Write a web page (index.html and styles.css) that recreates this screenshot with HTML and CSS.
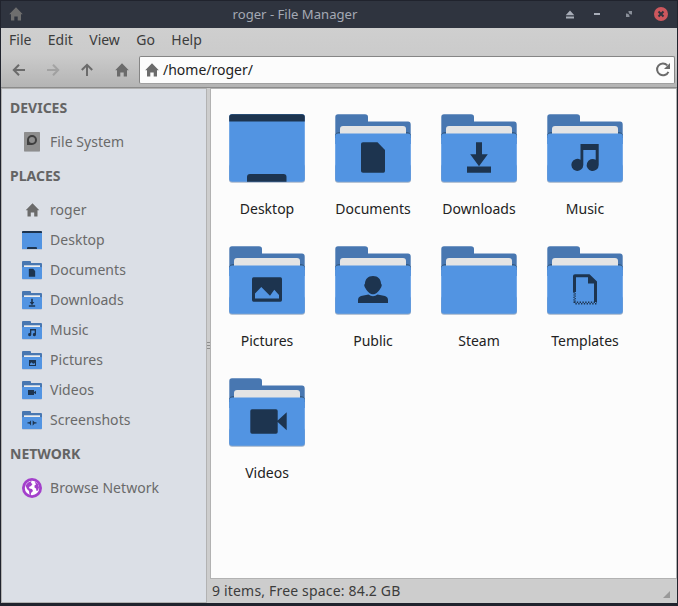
FILE: index.html
```html
<!DOCTYPE html>
<html lang="en">
<head>
<meta charset="utf-8">
<title>roger - File Manager</title>
<link rel="stylesheet" href="styles.css">
</head>
<body>
<svg class="defs" aria-hidden="true">
  <symbol id="home" viewBox="0 0 14 14"><path d="M7 .3 13.8 7.3H12V13.4H8.7V9.4H5.3V13.4H2V7.3H.2Z"/></symbol>
  <symbol id="folder" viewBox="0 0 76 69">
    <rect y="50" width="76" height="18.800" rx="3" fill="#9fb0c6"/>
    <path d="M.3 30V3Q.3 .3 3 .3H30Q33 .3 33 3V7.400H73Q75.700 7.400 75.700 10.400V30Z" fill="#4877b1"/>
    <path d="M.3 24V20.500Q1 18 4 18H72Q75 18 75.700 20.500V24Z" fill="#34587f"/>
    <path d="M5 20V15Q5 12 8 12H68Q71 12 71 15V20Z" fill="#e4e4e4"/>
    <rect x=".2" y="19.400" width="75.600" height="48.300" rx="3" fill="#5294e2"/>
  </symbol>
  <symbol id="folder-small" viewBox="0 0 20 19">
    <rect y="8" width="20" height="10.600" rx="1" fill="#a5b4c8"/>
    <path d="M0 8V1Q0 0 1 0H8Q9 0 9 1V2H19Q20 2 20 3V8Z" fill="#4877b1"/>
    <path d="M2 4.300H18V7H2Z" fill="#eeeeee"/>
    <rect y="6" width="20" height="12" rx=".7" fill="#5294e2"/>
  </symbol>
  <symbol id="desktop" viewBox="0 0 76 69">
    <rect y="50" width="76" height="18.800" rx="3" fill="#a9b7ca"/>
    <rect x=".2" width="75.600" height="67.700" rx="3" fill="#5294e2"/>
    <path d="M.2 7.600V3Q.2 .2 3 .2H73Q75.800 .2 75.800 3V7.600Z" fill="#1d344f"/>
    <path d="M18 67.700V63Q18 60 21 60H54.500Q57.500 60 57.500 63V67.700Z" fill="#1d344f"/>
  </symbol>
  <symbol id="document" viewBox="0 0 76 69"><path d="M28 28.300H42.500L50 36V57Q50 58.700 48.500 58.700H28Q26 58.700 26 57V30Q26 28.300 28 28.300Z"/></symbol>
  <symbol id="download" viewBox="0 0 76 69"><path d="M35 28.300H41V40.300H46.800L38 52.300 29.200 40.300H35ZM26 52.500H50V58.700H26Z"/></symbol>
  <symbol id="music" viewBox="0 0 76 69"><path d="M33.500 30H51.700V51A6 6 0 1 1 48.700 45.800V36H36.300V51A6 6 0 1 1 33.500 45.800Z"/></symbol>
  <symbol id="picture" viewBox="0 0 76 69"><path fill-rule="evenodd" d="M24.500 31.300H51.500Q53 31.300 53 33V54Q53 55.700 51.500 55.700H24.500Q23 55.700 23 54V33Q23 31.300 24.500 31.300ZM26 52.500H50V49L45.300 43.800 41 49.700 32.300 41 26 47.500Z"/></symbol>
  <symbol id="person" viewBox="0 0 76 69"><path d="M38 30C43 30 46 33.500 46 37.500Q47.500 38.500 46.300 41C44 45.500 41 48.300 38 48.300S32 45.500 29.700 41Q28.500 38.500 30 37.500C30 33.500 33 30 38 30ZM33.500 48.500Q38 52 42.500 48.500L50 50Q53 51 53 54V57H23V54Q23 51 26 50Z"/></symbol>
  <symbol id="template" viewBox="0 0 76 69">
    <path d="M26 46V30Q26 28.300 28 28.300H42.500L50 35.500V56H47V37.500H41V31.300H29V46Z"/>
    <path d="M27 46V57M28.200 47.200V57" fill="none" stroke="#1d344f" stroke-width="1.300" stroke-dasharray="1.200 1.200"/>
    <path d="M27 56.300H50M28.400 57.700H50" fill="none" stroke="#1d344f" stroke-width="1.400" stroke-dasharray="1.400 1.400"/>
  </symbol>
  <symbol id="video" viewBox="0 0 76 69"><path d="M23 31.300H47Q48.700 31.300 48.700 33V42.500L57.700 34.300V52.300L48.700 44V54Q48.700 55.700 47 55.700H23Q21.300 55.700 21.300 54V33Q21.300 31.300 23 31.300Z"/></symbol>
  <symbol id="shots" viewBox="0 0 76 69"><path d="M21 41.500H28L34.500 34V54L28 46H21ZM55 41.500H48L40.500 34V54L48 46H55Z"/></symbol>
</svg>

<div class="window">
  <header class="titlebar">
    <svg class="app-icon"><use href="#home"/></svg>
    <h1 class="title">roger - File Manager</h1>
    <div class="controls">
      <svg class="control" viewBox="0 0 22 22"><path d="M11 7.500 15.300 12.300H6.700ZM7 13.500H15V15.500H7Z"/></svg>
      <svg class="control" viewBox="0 0 22 22"><path d="M8 10H14V12H8Z"/></svg>
      <svg class="control" viewBox="0 0 22 22"><path d="M10 8H14V12L13 11 12.300 11.600 10.500 9.800 11 9ZM8 10 9 11 9.700 10.400 11.600 12.300 11 13 12 14H8Z" opacity=".75"/></svg>
      <svg class="close" viewBox="0 0 14 14"><circle cx="7" cy="7" r="7"/><path d="m4.500 4.500 5 5m0-5-5 5"/></svg>
    </div>
  </header>
  <div class="chrome">
    <nav class="menubar"><span>File</span><span>Edit</span><span>View</span><span>Go</span><span>Help</span></nav>
    <div class="toolbar">
      <svg class="tool" viewBox="0 0 14 14"><path class="line" d="M13 7H2M7 1.800 1.800 7 7 12.200"/></svg>
      <svg class="tool disabled" viewBox="0 0 14 14"><path class="line" d="M1 7H12M7 1.800 12.200 7 7 12.200"/></svg>
      <svg class="tool" viewBox="0 0 14 14"><path class="line" d="M7 13V2M1.800 7 7 1.800 12.200 7"/></svg>
      <svg class="tool go-home"><use href="#home"/></svg>
      <div class="location">
        <svg class="tool"><use href="#home"/></svg>
        <span class="path">/home/roger/</span>
        <svg class="reload" viewBox="0 0 16 16"><path class="arc" d="M12.300 3.400A5.900 5.900 0 1 0 13.400 9.800"/><path d="M15 1V7H9Z"/></svg>
      </div>
    </div>
  </div>
  <div class="body">
    <aside class="sidebar">
      <h2>DEVICES</h2>
      <div class="place"><svg viewBox="0 0 20 20"><rect x="2" y=".5" width="16" height="19.500" rx=".7" fill="#b7bbc1"/><rect x="2" width="16" height="19.300" rx=".7" fill="#8e8e8e"/><path d="M5 8H8V11H10V13H5Z" fill="#3f3f3f"/><circle cx="10" cy="8" r="4" fill="#8e8e8e" stroke="#3f3f3f" stroke-width="2"/></svg>File System</div>
      <h2>PLACES</h2>
      <div class="place"><svg class="home" viewBox="0 0 20 20"><use href="#home" x="3.500" y="3" width="14" height="14"/></svg>roger</div>
      <div class="place"><svg viewBox="0 0 20 20"><path d="M0 2H20V19.500H0Z" fill="#a9b7ca"/><path d="M0 1.500H20V19H0Z" fill="#5294e2"/><path d="M0 3V2Q0 1 1 1H19Q20 1 20 2V3ZM5 19V18Q5 17 6 17H14Q15 17 15 18V19Z"/></svg>Desktop</div>
      <div class="place"><svg viewBox="0 0 20 20"><use href="#folder-small" y="1" width="20" height="19"/><use href="#document" y="1" width="20" height="19"/></svg>Documents</div>
      <div class="place"><svg viewBox="0 0 20 20"><use href="#folder-small" y="1" width="20" height="19"/><use href="#download" y="1" width="20" height="19"/></svg>Downloads</div>
      <div class="place"><svg viewBox="0 0 20 20"><use href="#folder-small" y="1" width="20" height="19"/><path d="M8 9H14V14.500A1.600 1.600 0 1 1 12.700 13V10.600H9.300V14.500A1.600 1.600 0 1 1 8 13Z"/></svg>Music</div>
      <div class="place"><svg viewBox="0 0 20 20"><use href="#folder-small" y="1" width="20" height="19"/><path fill-rule="evenodd" d="M7 10H14V16H7ZM8 15H13V13.700L12.200 12.700 11.300 14 9.500 12.200 8 13.700Z"/></svg>Pictures</div>
      <div class="place"><svg viewBox="0 0 20 20"><use href="#folder-small" y="1" width="20" height="19"/><path d="M6 10H12V12L14 10.700V14.300L12 13V15H6Z"/></svg>Videos</div>
      <div class="place"><svg viewBox="0 0 20 20"><use href="#folder-small" y="1" width="20" height="19"/><use href="#shots" y="1" width="20" height="19"/></svg>Screenshots</div>
      <h2>NETWORK</h2>
      <div class="place"><svg viewBox="0 0 20 20"><circle cx="10" cy="10" r="10" fill="#a340cb"/><circle cx="10" cy="10" r="7.200" fill="#fff"/><path d="M3.500 7.500 6 4.500 9.500 3 9 5 10.500 6 9 8 7 9 7.500 10.500 10 11 11 13 9 15 9 17 7.500 16.500 7 13 5 11ZM12.500 3.500 16 6 17 9.500 16 12.500 14.500 13 14 10.500 12.500 9.500 12.500 7.500 14 6.500Z" fill="#a340cb"/></svg>Browse Network</div>
    </aside>
    <div class="splitter"><i></i><i></i><i></i></div>
    <div class="main">
      <main class="files">
        <figure><svg><use href="#desktop"/></svg><figcaption>Desktop</figcaption></figure>
        <figure><svg><use href="#folder"/><use href="#document"/></svg><figcaption>Documents</figcaption></figure>
        <figure><svg><use href="#folder"/><use href="#download"/></svg><figcaption>Downloads</figcaption></figure>
        <figure><svg><use href="#folder"/><use href="#music"/></svg><figcaption>Music</figcaption></figure>
        <figure><svg><use href="#folder"/><use href="#picture"/></svg><figcaption>Pictures</figcaption></figure>
        <figure><svg><use href="#folder"/><use href="#person"/></svg><figcaption>Public</figcaption></figure>
        <figure><svg><use href="#folder"/></svg><figcaption>Steam</figcaption></figure>
        <figure><svg><use href="#folder"/><use href="#template"/></svg><figcaption>Templates</figcaption></figure>
        <figure><svg><use href="#folder"/><use href="#video"/></svg><figcaption>Videos</figcaption></figure>
      </main>
      <footer class="status">9 items, Free space: 84.2 GB<svg class="grip" viewBox="0 0 7 7"><path d="M7 0V7H0Z"/></svg></footer>
    </div>
  </div>
</div>
</body>
</html>
```
FILE: styles.css
```css
* { box-sizing: border-box; }
body {
  margin: 0;
  font: 14px/20px "Noto Sans", sans-serif;
  color: #3c3c3c;
}
h1, h2, figure { margin: 0; }
svg { display: block; flex: none; }
.defs { position: absolute; width: 0; height: 0; }

.window {
  display: flex;
  flex-direction: column;
  width: 678px;
  height: 606px;
  padding: 0 1px 3px;
  background: #20232d;
}
.titlebar {
  display: grid;
  grid-template-columns: 30px 1fr 118px;
  align-items: center;
  height: 28px;
  padding-bottom: 1px;
  border-top: 1px solid #20232d;
  background: #2f343f;
}
.app-icon { width: 14px; height: 14px; margin-left: 8px; fill: #6e6e6e; }
.title {
  text-align: center;
  font-size: 13.100px;
  font-weight: 400;
  color: #a4a9b4;
}
.controls { display: flex; align-items: center; }
.control { width: 22px; height: 22px; margin-right: 5px; fill: #a8adb8; }
.control:nth-child(2) { margin-right: 10px; }
.control:nth-child(3) { margin-right: 14px; }
.close { width: 14px; height: 14px; fill: #cc575d; }
.close path { stroke: #2f343f; stroke-width: 2; }

.chrome {
  height: 60px;
  border-bottom: 1px solid #8b8b8b;
  background: linear-gradient(#cfcfcf 0, #cbcbcb 45%, #b4b4b4 100%);
}
.menubar { display: flex; gap: 16.400px; height: 28px; padding: 2px 8px 0; }
.toolbar { display: flex; align-items: center; gap: 20px; height: 28px; padding-left: 11px; }
.tool { width: 14px; height: 14px; fill: #6b6b6b; }
.go-home { margin: 0 -1px 0 1px; }
.line { fill: none; stroke: #6b6b6b; stroke-width: 2; }
.disabled { opacity: .35; }
.location {
  display: flex;
  flex: 1;
  align-items: center;
  height: 28px;
  margin: 0 2px 0 -9px;
  padding: 0 3px 0 5px;
  border: 1px solid #858585;
  border-bottom-color: #a0a0a0;
  border-radius: 2px;
  background: #fcfcfc;
}
.path { flex: 1; margin-left: 4px; color: #222; }
.reload { width: 16px; height: 16px; fill: #6b6b6b; }
.arc { fill: none; stroke: #6b6b6b; stroke-width: 2; }

.body { display: flex; flex: 1; min-height: 0; background: #cdcdcd; }
.sidebar {
  width: 206px;
  border: 1px solid #b2b2b2;
  background: #dbdfe6;
  color: #6a6a6a;
}
.sidebar h2 { height: 38px; padding-left: 8px; font-size: 14px; line-height: 38px; font-weight: 700; color: #646464; }
.place { display: flex; align-items: center; gap: 8px; height: 30px; padding-left: 20px; letter-spacing: .05px; }
.place svg { width: 20px; height: 20px; fill: #1d344f; }
.place .home { fill: #6b6b6b; }
.splitter { display: flex; flex-direction: column; justify-content: center; gap: 2px; width: 3px; }
.splitter i { height: 1px; background: #8e8e8e; }
.main { display: flex; flex: 1; flex-direction: column; }
.files {
  display: grid;
  flex: 1;
  grid-template-columns: repeat(4, 106px);
  grid-auto-rows: 132px;
  padding: 25px 0 0 3px;
  border: 1px solid #b2b2b2;
  background: #fcfcfc;
}
figure { display: flex; flex-direction: column; align-items: center; }
figure svg { width: 76px; height: 69px; fill: #1d344f; }
figcaption { margin-top: 16px; color: #222; }
.status { display: flex; align-items: center; justify-content: space-between; height: 24px; padding: 0 7px 0 2px; letter-spacing: .18px; }
.grip { width: 7px; height: 7px; margin-top: 6px; fill: #999; }
```
